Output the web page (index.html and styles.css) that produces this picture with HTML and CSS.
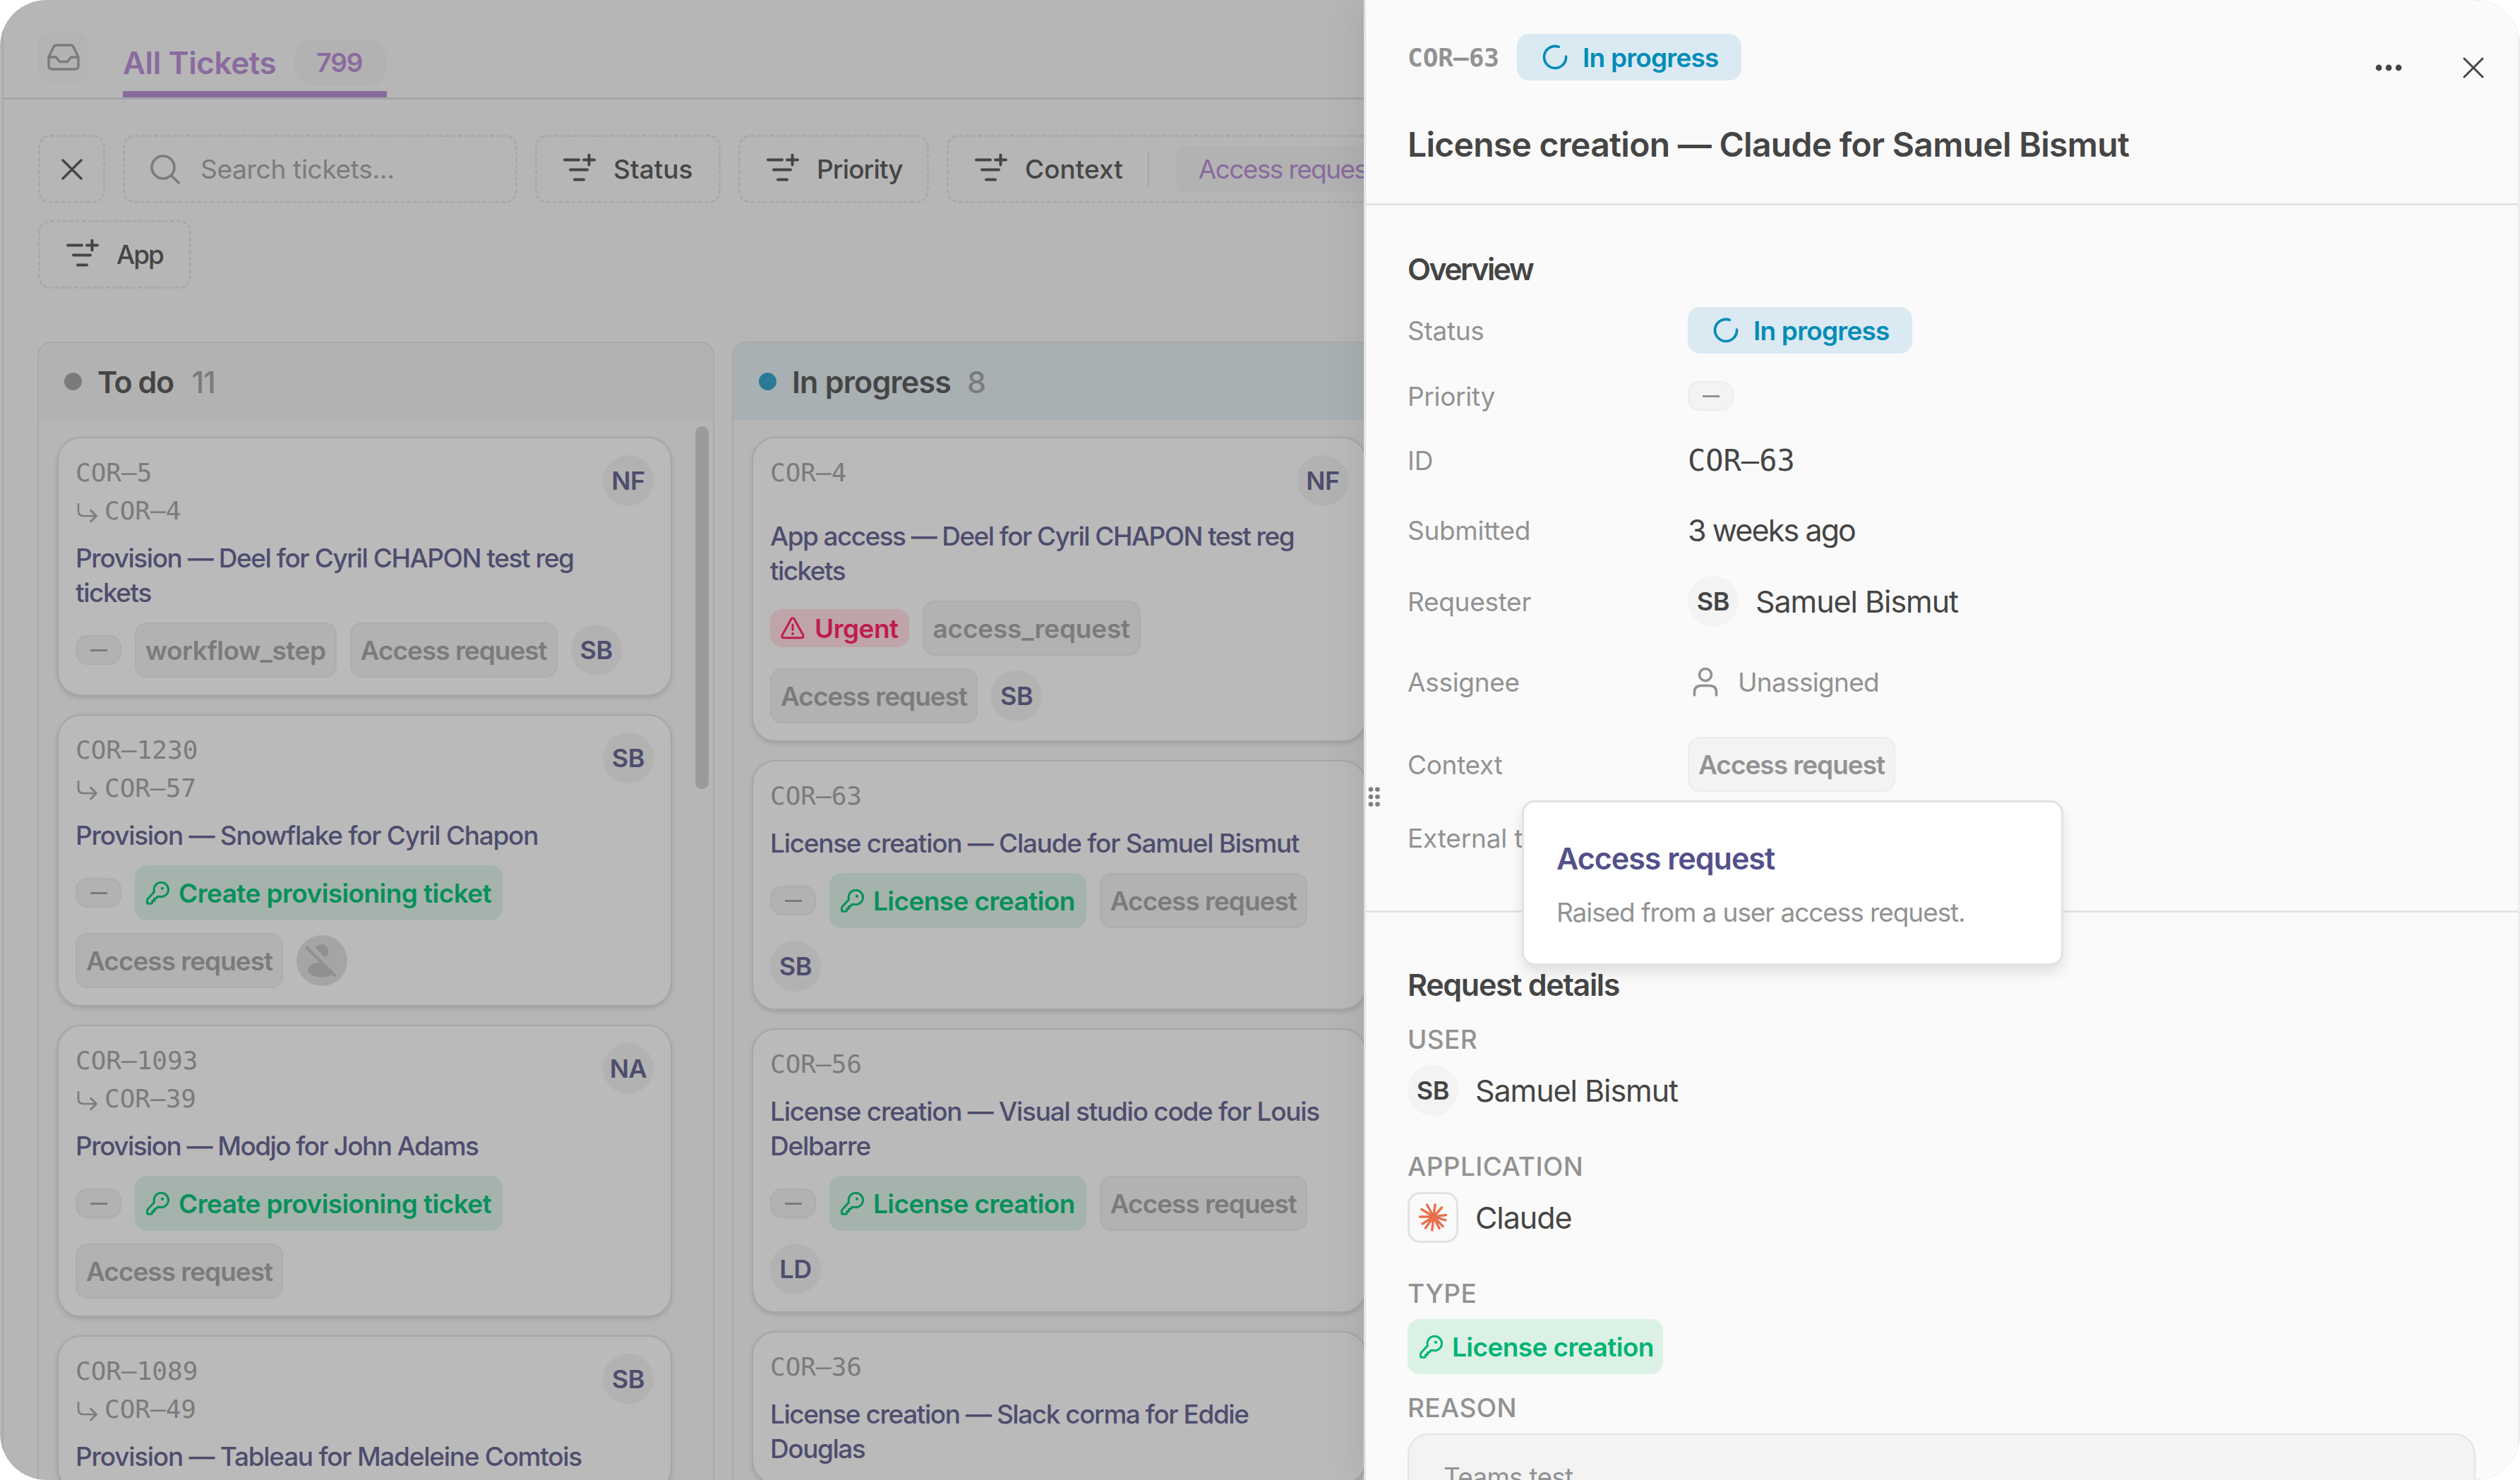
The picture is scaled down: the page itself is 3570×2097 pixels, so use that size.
FILE: index.html
```html
<!DOCTYPE html>
<html lang="en">
<head>
    <meta charset="UTF-8">
    <meta name="viewport" content="width=device-width, initial-scale=1.0">
    <title>All Tickets</title>
    <link rel="stylesheet" href="styles.css">
</head>
<body>
    <!-- Icon sprite -->
    <svg class="sprite" width="0" height="0">
        <symbol id="i-inbox" viewBox="0 0 46 38"><path d="M2 19 L9 4.5 Q10.2 2 13 2 H33 Q35.8 2 37 4.5 L44 19 V31 Q44 36 39 36 H7 Q2 36 2 31 Z M2 19 H12.5 L17.5 25.5 H28.5 L33.5 19 H44"/></symbol>
        <symbol id="i-x" viewBox="0 0 30 30"><path d="M2 2 L28 28 M28 2 L2 28"/></symbol>
        <symbol id="i-search" viewBox="0 0 42 42"><circle cx="18" cy="18" r="16"/><path d="M30 30 L40 40"/></symbol>
        <symbol id="i-filter" viewBox="0 0 46 44"><path d="M2 8.5 H22 M29 8.5 H44 M36.5 1.5 V15.5 M10 22.5 H34 M16 36.5 H29"/></symbol>
        <symbol id="i-child" viewBox="0 0 30 30"><path d="M2 2 V12 Q2 19 9 19 H27 M19.5 11 L27.5 19 L19.5 27"/></symbol>
        <symbol id="i-key" viewBox="0 0 33 33"><path d="M11.6 14.6 A10.2 10.2 0 1 1 18.6 21.3 L15.8 21.6 L14 24.2 H11.4 V27.4 H8.6 V29.5 Q8.6 31.3 6.8 31.3 H3.3 Q1.5 31.3 1.5 29.5 V26.6 Q1.5 25.4 2.4 24.5 Z"/><circle class="dot" cx="23" cy="9.8" r="2.1"/></symbol>
        <symbol id="i-alert" viewBox="0 0 34 32"><path d="M14.6 3.4 Q17 0 19.4 3.4 L31.6 25.4 Q33.3 29.5 29.4 29.8 H4.6 Q.7 29.5 2.4 25.4 Z M17 11 V18.5"/><circle class="dot" cx="17" cy="24" r="1.9"/></symbol>
        <symbol id="i-spin" viewBox="0 0 36 36"><path d="M23.3 3.4 A15.5 15.5 0 1 0 33.5 17"/></symbol>
        <symbol id="i-user" viewBox="0 0 36 42"><circle cx="18" cy="11" r="8.5"/><path d="M2.5 40 V36 Q2.5 26.5 12 26.5 H24 Q33.5 26.5 33.5 36 V40"/></symbol>
        <symbol id="i-nouser" viewBox="0 0 72 72"><circle cx="35.5" cy="23" r="10"/><ellipse cx="35" cy="49" rx="19" ry="10.5"/><path class="cut" d="M16 12 L62 58"/><path class="slash" d="M15 18 L54 57"/></symbol>
        <symbol id="i-claude" viewBox="0 0 40 40"><path d="M21 19 L11.5 2 M21 19 L23 1.8 M21 19 L32.5 6 M21 19 L38.5 16.5 M21 19 L38 23.8 M21 19 L34 32.5 M21 19 L29 35.5 M21 19 L18.8 38 M21 19 L9.5 35 M21 19 L5 29 M21 19 L1.5 19 M21 19 L4 8.5"/></symbol>
        <symbol id="i-more" viewBox="0 0 38 10"><circle cx="5" cy="5" r="4.4"/><circle cx="19" cy="5" r="4.4"/><circle cx="33" cy="5" r="4.4"/></symbol>
        <symbol id="i-grip" viewBox="0 0 18 28"><circle cx="4" cy="3.5" r="3.3"/><circle cx="13.5" cy="3.5" r="3.3"/><circle cx="4" cy="14" r="3.3"/><circle cx="13.5" cy="14" r="3.3"/><circle cx="4" cy="24.5" r="3.3"/><circle cx="13.5" cy="24.5" r="3.3"/></symbol>
    </svg>

    <div class="app">
        <main class="page">
            <header class="tabs">
                <button class="inbox"><svg class="ico" width="46" height="38"><use href="#i-inbox"/></svg></button>
                <div class="tab">
                    <span class="tab-name">All Tickets</span>
                    <span class="tab-count">799</span>
                </div>
            </header>

            <div class="toolbar">
                <div class="toolbar-row">
                    <button class="filter clear"><svg class="ico" width="30" height="30"><use href="#i-x"/></svg></button>
                    <div class="filter search"><svg class="ico" width="42" height="42"><use href="#i-search"/></svg>Search tickets...</div>
                    <button class="filter f-status"><svg class="ico" width="46" height="44"><use href="#i-filter"/></svg><span>Status</span></button>
                    <button class="filter f-priority"><svg class="ico" width="46" height="44"><use href="#i-filter"/></svg><span>Priority</span></button>
                    <div class="filter f-context">
                        <svg class="ico" width="46" height="44"><use href="#i-filter"/></svg><span>Context</span>
                        <i class="sep"></i>
                        <span class="selected">Access request</span>
                    </div>
                </div>
                <div class="toolbar-row">
                    <button class="filter f-app"><svg class="ico" width="46" height="44"><use href="#i-filter"/></svg><span>App</span></button>
                </div>
            </div>

            <div class="board">
                <section class="column">
                    <div class="column-head"><i class="bullet"></i><h2>To do</h2><span class="count">11</span></div>
                    <div class="column-body">
                        <div class="cards">
                            <article class="card">
                                <div class="card-head">
                                    <div class="ids"><span>COR–5</span><span class="parent"><svg class="ico" width="30" height="30"><use href="#i-child"/></svg>COR–4</span></div>
                                    <span class="avatar">NF</span>
                                </div>
                                <h3 class="tight">Provision — Deel for Cyril CHAPON test reg tickets</h3>
                                <div class="chips">
                                    <span class="chip none"></span>
                                    <span class="chip gray snug">workflow_step</span>
                                    <span class="chip gray">Access request</span>
                                    <span class="avatar">SB</span>
                                </div>
                            </article>
                            <article class="card">
                                <div class="card-head">
                                    <div class="ids"><span>COR–1230</span><span class="parent"><svg class="ico" width="30" height="30"><use href="#i-child"/></svg>COR–57</span></div>
                                    <span class="avatar">SB</span>
                                </div>
                                <h3>Provision — Snowflake for Cyril Chapon</h3>
                                <div class="chips">
                                    <span class="chip none"></span>
                                    <span class="chip green"><svg class="ico" width="33" height="33"><use href="#i-key"/></svg>Create provisioning ticket</span>
                                    <span class="chip gray">Access request</span>
                                    <span class="avatar off"><svg width="72" height="72"><use href="#i-nouser"/></svg></span>
                                </div>
                            </article>
                            <article class="card">
                                <div class="card-head">
                                    <div class="ids"><span>COR–1093</span><span class="parent"><svg class="ico" width="30" height="30"><use href="#i-child"/></svg>COR–39</span></div>
                                    <span class="avatar">NA</span>
                                </div>
                                <h3 class="tighter">Provision — Modjo for John Adams</h3>
                                <div class="chips">
                                    <span class="chip none"></span>
                                    <span class="chip green"><svg class="ico" width="33" height="33"><use href="#i-key"/></svg>Create provisioning ticket</span>
                                    <span class="chip gray">Access request</span>
                                </div>
                            </article>
                            <article class="card">
                                <div class="card-head">
                                    <div class="ids"><span>COR–1089</span><span class="parent"><svg class="ico" width="30" height="30"><use href="#i-child"/></svg>COR–49</span></div>
                                    <span class="avatar">SB</span>
                                </div>
                                <h3>Provision — Tableau for Madeleine Comtois</h3>
                            </article>
                        </div>
                        <div class="scroll"></div>
                    </div>
                </section>

                <section class="column progress">
                    <div class="column-head"><i class="bullet"></i><h2>In progress</h2><span class="count">8</span></div>
                    <div class="column-body">
                        <div class="cards">
                            <article class="card">
                                <div class="card-head">
                                    <div class="ids"><span>COR–4</span></div>
                                    <span class="avatar">NF</span>
                                </div>
                                <h3 class="tighter">App access — Deel for Cyril CHAPON test reg tickets</h3>
                                <div class="chips">
                                    <span class="chip urgent"><svg class="ico" width="34" height="32"><use href="#i-alert"/></svg>Urgent</span>
                                    <span class="chip gray under">access_request</span>
                                    <span class="chip gray">Access request</span>
                                    <span class="avatar">SB</span>
                                </div>
                            </article>
                            <article class="card">
                                <div class="card-head"><div class="ids"><span>COR–63</span></div></div>
                                <h3>License creation — Claude for Samuel Bismut</h3>
                                <div class="chips">
                                    <span class="chip none"></span>
                                    <span class="chip green"><svg class="ico" width="33" height="33"><use href="#i-key"/></svg>License creation</span>
                                    <span class="chip gray">Access request</span>
                                    <span class="avatar">SB</span>
                                </div>
                            </article>
                            <article class="card">
                                <div class="card-head"><div class="ids"><span>COR–56</span></div></div>
                                <h3>License creation — Visual studio code for Louis Delbarre</h3>
                                <div class="chips">
                                    <span class="chip none"></span>
                                    <span class="chip green"><svg class="ico" width="33" height="33"><use href="#i-key"/></svg>License creation</span>
                                    <span class="chip gray">Access request</span>
                                    <span class="avatar">LD</span>
                                </div>
                            </article>
                            <article class="card">
                                <div class="card-head"><div class="ids"><span>COR–36</span></div></div>
                                <h3 class="tight">License creation — Slack corma for Eddie Douglas</h3>
                            </article>
                        </div>
                    </div>
                </section>
            </div>
        </main>

        <aside class="drawer">
            <svg class="grip" width="18" height="28"><use href="#i-grip"/></svg>
            <header class="drawer-head">
                <div class="drawer-top">
                    <span class="drawer-id">COR–63</span>
                    <span class="status"><svg class="ico" width="36" height="36"><use href="#i-spin"/></svg>In progress</span>
                    <div class="actions">
                        <svg class="more" width="38" height="10"><use href="#i-more"/></svg>
                        <svg class="ico" width="30" height="30"><use href="#i-x"/></svg>
                    </div>
                </div>
                <h1>License creation — Claude for Samuel Bismut</h1>
            </header>

            <section class="overview">
                <h4 class="tight">Overview</h4>
                <dl>
                    <div class="row r-status"><dt>Status</dt><dd><span class="status"><svg class="ico" width="36" height="36"><use href="#i-spin"/></svg>In progress</span></dd></div>
                    <div class="row r-priority"><dt>Priority</dt><dd><span class="chip none"></span></dd></div>
                    <div class="row r-id"><dt>ID</dt><dd class="mono">COR–63</dd></div>
                    <div class="row r-date"><dt>Submitted</dt><dd class="date">3 weeks ago</dd></div>
                    <div class="row r-user"><dt>Requester</dt><dd><span class="avatar">SB</span>Samuel Bismut</dd></div>
                    <div class="row r-assignee"><dt>Assignee</dt><dd class="nobody"><svg class="ico" width="36" height="42"><use href="#i-user"/></svg>Unassigned</dd></div>
                    <div class="row r-context">
                        <dt>Context</dt>
                        <dd><span class="chip gray">Access request</span></dd>
                        <div class="tooltip">
                            <strong>Access request</strong>
                            <p>Raised from a user access request.</p>
                        </div>
                    </div>
                    <div class="row r-external"><dt>External ticket</dt></div>
                </dl>
            </section>

            <section class="details">
                <h4>Request details</h4>
                <h5>User</h5>
                <div class="value"><span class="avatar">SB</span>Samuel Bismut</div>
                <h5>Application</h5>
                <div class="value"><span class="app-logo"><svg width="40" height="40"><use href="#i-claude"/></svg></span>Claude</div>
                <h5>Type</h5>
                <span class="chip green"><svg class="ico" width="33" height="33"><use href="#i-key"/></svg>License creation</span>
                <h5 class="reason-label">Reason</h5>
                <div class="reason">Teams test</div>
            </section>
        </aside>
    </div>
</body>
</html>
```

FILE: styles.css
```css
* { box-sizing: border-box; }
body {
    margin: 0;
    background: #fff;
    font-family: Inter, "Liberation Sans", sans-serif;
    font-size: 37px;
    color: #454545;
}
h1, h2, h3, h4, h5, dl, dd, p { margin: 0; }
button { font: inherit; color: inherit; }
svg { display: block; flex: none; }
.sprite { position: absolute; }
.ico {
    fill: none;
    stroke: currentColor;
    stroke-width: 3;
    stroke-linecap: round;
    stroke-linejoin: round;
}
.dot { fill: currentColor; stroke: none; }

.app {
    position: relative;
    width: 3570px;
    height: 2097px;
    border-radius: 66px;
    overflow: hidden;
    background: #b6b6b6;
}
.page {
    height: 2097px;
    margin-left: 3px;
    border-left: 2px solid #a8a8a8;
    overflow: hidden;
}

/* Tabs */
.tabs {
    display: flex;
    align-items: flex-start;
    height: 141px;
    padding: 45px 0 0 49px;
    border-bottom: 3px solid #a5a5a6;
}
.inbox {
    display: flex;
    align-items: center;
    justify-content: center;
    width: 72px;
    height: 72px;
    padding: 0;
    border: 0;
    border-radius: 20px;
    background: #b3b3b3;
    color: #7b7b7b;
}
.inbox .ico { stroke-width: 3.4; }
.tab {
    display: flex;
    align-items: center;
    gap: 26px;
    height: 93px;
    margin-left: 48px;
    padding-top: 4px;
    border-bottom: 9px solid #8a6a9f;
    color: #8a6a9f;
    font-weight: 600;
}
.tab-name { font-size: 44px; letter-spacing: -0.4px; }
.tab-count {
    width: 131px;
    padding-right: 4px;
    line-height: 66px;
    border-radius: 28px;
    background: #b2b2b2;
    text-align: center;
    letter-spacing: -1px;
}

/* Filters */
.toolbar {
    display: flex;
    flex-direction: column;
    gap: 24px;
    padding: 50px 0 0 49px;
}
.toolbar-row { display: flex; gap: 25px; }
.filter {
    display: flex;
    align-items: center;
    flex: none;
    gap: 25px;
    height: 97px;
    padding: 0 0 0 37px;
    border: 3px dashed #a9a9a9;
    border-radius: 17px;
    background: none;
    font-weight: 500;
}
.filter .ico { stroke-width: 4; }
.clear { width: 95px; padding: 0 0 0 30px; }
.clear .ico { stroke-width: 3.4; }
.search { width: 559px; padding-left: 36px; gap: 29px; color: #7b7b7b; font-weight: 400; letter-spacing: -0.3px; }
.search .ico { stroke-width: 3.6; }
.f-status { width: 263px; }
.f-priority { width: 270px; letter-spacing: -0.9px; }
.f-context { width: 760px; }
.f-app { width: 217px; letter-spacing: -2px; }
.sep { width: 2px; height: 48px; margin-left: 10px; background: #a5a5a5; }
.selected {
    margin-left: 12px;
    padding: 0 33px;
    line-height: 66px;
    border-radius: 14px;
    background: #b2b2b2;
    color: #8a6a9f;
    font-weight: 400;
    letter-spacing: -1.6px;
}

/* Board */
.board { display: flex; gap: 25px; padding: 75px 0 0 48px; }
.column {
    flex: none;
    width: 959px;
    height: 1800px;
    border: 2px solid #a9a9a9;
    border-radius: 20px;
    overflow: hidden;
}
.column-head {
    display: flex;
    align-items: center;
    height: 109px;
    padding-left: 36px;
    background: #b2b2b2;
}
.bullet { width: 25px; height: 25px; border-radius: 50%; background: #7b7b7b; }
.column-head h2 { margin-left: 22px; font-size: 43px; font-weight: 600; letter-spacing: -1.5px; }
.count { margin-left: 26px; font-size: 43px; font-weight: 500; color: #7b7b7b; letter-spacing: -1.5px; }
.progress .column-head { background: #a9b0b3; }
.progress .column-head h2 { letter-spacing: -0.8px; }
.progress .count { margin-left: 23px; }
.progress .bullet { background: #2b7a95; }
.column-body {
    display: flex;
    gap: 33px;
    padding: 24px 0 0 26px;
}
.cards { display: flex; flex-direction: column; gap: 26px; width: 871px; }
.scroll { width: 19px; height: 514px; margin-top: -15px; border-radius: 10px; background: #9b9b9b; }
.card {
    padding: 24px;
    border: 2px solid #a6a6a6;
    border-radius: 34px;
    background: #bababa;
    box-shadow: 0 3px 6px rgba(0, 0, 0, 0.12);
}
.card-head { display: flex; justify-content: space-between; align-items: flex-start; }
.ids {
    display: flex;
    flex-direction: column;
    gap: 5px;
    line-height: 49px;
    font-family: "DejaVu Sans Mono", monospace;
    font-size: 36px;
    color: #7b7b7b;
}
.parent { display: flex; align-items: center; gap: 9px; padding-left: 2px; }
.parent .ico { margin-top: 7px; stroke-width: 2.6; }
.card h3 {
    margin-top: 18px;
    font-size: 37px;
    font-weight: 500;
    line-height: 49px;
    letter-spacing: -1.28px;
    color: #4e4d6e;
}
.card h3.tight { letter-spacing: -1.45px; }
.card h3.tighter { letter-spacing: -1.58px; }
.avatar {
    flex: none;
    width: 72px;
    height: 72px;
    line-height: 72px;
    border-radius: 50%;
    background: #b2b2b2;
    color: #4e4d6e;
    font-size: 36px;
    font-weight: 600;
    letter-spacing: -0.4px;
    text-align: center;
}
.avatar.off { background: #a5a5a5; fill: #909090; }
.cut { stroke: #a5a5a5; stroke-width: 7; }
.slash { stroke: #909090; stroke-width: 4.5; stroke-linecap: round; }

/* Chips */
.chips {
    display: flex;
    flex-wrap: wrap;
    align-items: center;
    gap: 18px 19px;
    margin-top: 18px;
}
.chip {
    display: inline-flex;
    align-items: center;
    height: 78px;
    border-radius: 17px;
    font-size: 37px;
    font-weight: 600;
    white-space: nowrap;
}
.chip.gray {
    padding: 0 13px;
    border: 2px solid #adadad;
    background: #b2b2b2;
    color: #7b7b7b;
    letter-spacing: -1px;
}
.chip.snug { letter-spacing: -0.48px; }
.chip.under { letter-spacing: -0.2px; }
.chip.green {
    gap: 13px;
    padding: 0 16px;
    background: #a5b3ad;
    color: #06905b;
    letter-spacing: -0.58px;
}
.chip.urgent {
    gap: 14px;
    height: 54px;
    padding: 0 15px;
    background: #bfa4aa;
    color: #c01c4c;
    letter-spacing: -0.55px;
}
.chip.none {
    justify-content: center;
    width: 65px;
    height: 42px;
    border: 2px solid #adadad;
    background: #b2b2b2;
    color: #7b7b7b;
}
.chip.none::before { content: ""; width: 24px; height: 3px; background: currentColor; }

/* Drawer */
.drawer {
    position: absolute;
    top: 0;
    right: 0;
    width: 1638px;
    height: 2097px;
    border-left: 3px solid #e2e2e5;
    border-right: 3px solid #ededef;
    background: #fafafa;
    box-shadow: 0 0 60px rgba(0, 0, 0, 0.1);
}
.grip { position: absolute; left: 3px; top: 1115px; fill: #808080; }
.drawer-head {
    height: 291px;
    padding: 48px 48px 0 59px;
    border-bottom: 3px solid #e2e2e5;
}
.drawer-top { display: flex; height: 66px; align-items: center; }
.drawer-id {
    font-family: "DejaVu Sans Mono", monospace;
    font-size: 36px;
    font-weight: 700;
    color: #929292;
}
.status {
    display: inline-flex;
    align-items: center;
    gap: 21px;
    width: 318px;
    height: 66px;
    padding-left: 36px;
    border-radius: 17px;
    background: #dbe9f2;
    color: #008cb8;
    font-size: 37px;
    font-weight: 600;
    letter-spacing: -0.79px;
    white-space: nowrap;
}
.drawer-top .status { margin-left: 25px; }
.status .ico { stroke-width: 3.6; }
.actions { display: flex; align-items: center; gap: 86px; margin: 30px 0 0 auto; }
.more { fill: #454545; }
h1 {
    margin-top: 61px;
    font-size: 48px;
    font-weight: 600;
    line-height: 60px;
    letter-spacing: -0.71px;
}
.overview { height: 1002px; padding: 65px 60px 0 59px; border-bottom: 3px solid #e2e2e5; }
h4 { font-size: 43px; font-weight: 600; line-height: 50px; letter-spacing: -1.3px; }
h4.tight { letter-spacing: -2.6px; }
dl { display: flex; flex-direction: column; gap: 24px; margin-top: 29px; }
.row { position: relative; display: flex; align-items: center; }
.row dt { width: 397px; flex: none; color: #929292; letter-spacing: -0.3px; white-space: nowrap; }
.row dd { display: flex; align-items: center; gap: 24px; font-size: 43px; letter-spacing: -1.06px; }
.r-status { height: 66px; }
.r-priority { height: 72px; }
.r-id { height: 62px; }
.r-date { height: 88px; }
.r-user { height: 66px; }
.r-assignee { height: 114px; }
.r-context { height: 72px; }
.r-external { height: 88px; }
.row dd.mono { font-family: "DejaVu Sans Mono", monospace; font-size: 42px; letter-spacing: 0; }
.row dd.date { letter-spacing: -1.9px; }
.row dd.nobody { gap: 28px; padding-left: 7px; font-size: 37px; color: #929292; letter-spacing: -0.7px; }
.nobody .ico { stroke-width: 3.6; }
.drawer .avatar { background: #f3f3f3; color: #454545; }
.drawer .chip.gray, .drawer .chip.none { border-color: #ededef; background: #f3f3f3; color: #929292; }
.drawer .chip.green { background: #dcf1e6; color: #00b473; }

.tooltip {
    position: absolute;
    left: 162px;
    top: 87px;
    z-index: 2;
    width: 767px;
    height: 234px;
    padding: 54px 46px 0;
    border: 3px solid #e2e2e5;
    border-radius: 18px;
    background: #fff;
    box-shadow: 0 10px 18px rgba(0, 0, 0, 0.1);
}
.tooltip strong { display: block; font-size: 43px; font-weight: 600; line-height: 50px; letter-spacing: -1px; color: #53508a; }
.tooltip p { margin-top: 27px; line-height: 50px; letter-spacing: -1.08px; color: #929292; white-space: nowrap; }
.r-external dt { letter-spacing: -0.2px; }

.details { padding: 77px 60px 0 59px; }
h5 {
    margin-top: 52px;
    margin-bottom: 16px;
    font-size: 37px;
    font-weight: 500;
    line-height: 40px;
    letter-spacing: 0.4px;
    color: #929292;
    text-transform: uppercase;
}
h4 + h5 { margin-top: 33px; }
.value { display: flex; align-items: center; gap: 24px; height: 72px; font-size: 43px; letter-spacing: -1.06px; }
.app-logo {
    display: flex;
    align-items: center;
    justify-content: center;
    width: 72px;
    height: 72px;
    border: 3px solid #e2e2e5;
    border-radius: 18px;
}
.app-logo svg { stroke: #e8704d; stroke-width: 3.4; stroke-linecap: round; }
.details .chip { display: flex; width: 362px; padding-left: 17px; }
h5.reason-label { margin-top: 28px; }
.reason {
    height: 200px;
    padding: 35px 49px;
    border: 2px solid #e2e2e5;
    border-radius: 30px;
    background: #f3f3f3;
    line-height: 50px;
    letter-spacing: -0.77px;
    color: #929292;
}
```
